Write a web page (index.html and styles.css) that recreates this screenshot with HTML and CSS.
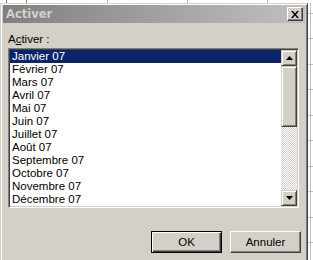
FILE: index.html
```html
<!DOCTYPE html>
<html>
<head>
<meta charset="utf-8">
<link rel="stylesheet" href="styles.css">
</head>
<body>
<div class="top">
  <div class="c c1"></div><div class="c c2"></div><div class="c c3"></div><div class="c c4"></div><div class="c c5"></div><div class="c c6"></div>
</div>
<div class="main">
  <div class="dialog">
    <div class="titlebar">
      <span class="title">Activer</span>
      <span class="close"><svg width="8" height="7" viewBox="0 0 8 7"><path d="M0 0h2l2 2.5L6 0h2L5 3.5 8 7H6L4 4.5 2 7H0l3-3.5z" fill="#000"/></svg></span>
    </div>
    <div class="body">
      <div class="label">A<u>c</u>tiver :</div>
      <div class="listbox">
        <div class="items">
          <div class="item sel">Janvier 07</div>
          <div class="item">Février 07</div>
          <div class="item">Mars 07</div>
          <div class="item">Avril 07</div>
          <div class="item">Mai 07</div>
          <div class="item">Juin 07</div>
          <div class="item">Juillet 07</div>
          <div class="item">Août 07</div>
          <div class="item">Septembre 07</div>
          <div class="item">Octobre 07</div>
          <div class="item">Novembre 07</div>
          <div class="item">Décembre 07</div>
        </div>
        <div class="scroll">
          <div class="sbtn"><svg width="7" height="4" viewBox="0 0 7 4"><path d="M3.5 0L7 4H0z" fill="#000"/></svg></div>
          <div class="thumb"></div>
          <div class="track"></div>
          <div class="sbtn"><svg width="7" height="4" viewBox="0 0 7 4"><path d="M0 0h7L3.5 4z" fill="#000"/></svg></div>
        </div>
      </div>
      <div class="buttons">
        <div class="btn default"><span>OK</span></div>
        <div class="btn"><span>Annuler</span></div>
      </div>
    </div>
  </div>
  <div class="sheet"></div>
</div>
</body>
</html>
```

FILE: styles.css
```css
html, body {
  margin: 0;
  padding: 0;
  width: 313px;
  height: 260px;
  overflow: hidden;
  background: #fff;
  font-family: "Liberation Sans", Arial, sans-serif;
  font-size: 11px;
}
.top {
  height: 3px;
  display: flex;
  overflow: hidden;
  background: #fff;
}
.c { height: 3px; border-right: 1px solid #c0c0c0; box-sizing: border-box; }
.c1 { width: 7px; border-right: 1px solid #808080; }
.c2 { width: 20px; border-right: 1px solid #808080; }
.c3 { width: 81px; }
.c4 { width: 80px; }
.c5 { width: 80px; }
.c6 { width: 45px; border-right: none; }
.main {
  display: flex;
  height: 257px;
}
.dialog {
  width: 308px;
  height: 257px;
  box-sizing: border-box;
  background: #d4d0c8;
  border-top: 1px solid #d4d0c8;
  border-left: 1px solid #d4d0c8;
  border-right: 1px solid #404040;
  box-shadow: inset 1px 1px 0 #fff, inset -1px 0 0 #808080;
  padding: 1px 2px 0 2px;
  display: flex;
  flex-direction: column;
}
.titlebar {
  height: 18px;
  background: linear-gradient(to right, #808080, #c0c0c0);
  display: flex;
  align-items: center;
  justify-content: space-between;
  padding: 0 2px 0 3px;
}
.title {
  color: #d4d0c8;
  font-family: "DejaVu Sans", sans-serif;
  font-weight: bold;
  font-size: 11.5px;
}
.close {
  width: 16px;
  height: 14px;
  box-sizing: border-box;
  background: #d4d0c8;
  border-top: 1px solid #fff;
  border-left: 1px solid #fff;
  border-right: 1px solid #404040;
  border-bottom: 1px solid #404040;
  box-shadow: inset -1px -1px 0 #808080;
  display: flex;
  align-items: center;
  justify-content: center;
  padding-right: 1px;
}
.body {
  flex: 1;
  padding: 9px 6px 0 5px;
  display: flex;
  flex-direction: column;
}
.label {
  height: 13px;
  line-height: 13px;
  color: #000;
  font-size: 11.5px;
  margin-top: 1px;
  margin-bottom: 2px;
}
.label u { text-decoration-thickness: 1px; text-underline-offset: 1px; }
.listbox {
  height: 160px;
  box-sizing: border-box;
  border-top: 1px solid #808080;
  border-left: 1px solid #808080;
  border-right: 1px solid #fff;
  border-bottom: 1px solid #fff;
  box-shadow: inset 1px 1px 0 #404040, inset -1px -1px 0 #d4d0c8;
  padding: 1px;
  display: flex;
  background: #fff;
}
.items {
  flex: 1;
  background: #fff;
}
.item {
  height: 13px;
  line-height: 13px;
  padding-left: 2px;
  color: #000;
  font-size: 11.5px;
  white-space: nowrap;
}
.item.sel {
  background: #0a246a;
  color: #fff;
}
.scroll {
  width: 16px;
  display: flex;
  flex-direction: column;
}
.sbtn, .thumb {
  box-sizing: border-box;
  background: #d4d0c8;
  border-top: 1px solid #d4d0c8;
  border-left: 1px solid #d4d0c8;
  border-right: 1px solid #404040;
  border-bottom: 1px solid #404040;
  box-shadow: inset 1px 1px 0 #fff, inset -1px -1px 0 #808080;
}
.sbtn {
  height: 16px;
  display: flex;
  align-items: center;
  justify-content: center;
}
.thumb { height: 61px; }
.track {
  flex: 1;
  background-color: #fff;
  background-image: repeating-conic-gradient(#d4d0c8 0 25%, #fff 0 50%);
  background-size: 2px 2px;
}
.buttons {
  margin-top: 23px;
  margin-right: -2px;
  display: flex;
  justify-content: flex-end;
  gap: 8px;
}
.btn {
  width: 71px;
  height: 22px;
  box-sizing: border-box;
  background: #d4d0c8;
  border-top: 1px solid #fff;
  border-left: 1px solid #fff;
  border-right: 1px solid #404040;
  border-bottom: 1px solid #404040;
  box-shadow: inset -1px -1px 0 #808080;
  display: flex;
  align-items: center;
  justify-content: center;
  font-size: 11.5px;
  color: #000;
}
.btn.default {
  border: 1px solid #000;
  box-shadow: inset 1px 1px 0 #fff, inset -1px -1px 0 #404040, inset -2px -2px 0 #808080;
}
.sheet {
  flex: 1;
  background-color: #fff;
  background-image:
    linear-gradient(to right, transparent 2px, #c0c0c0 2px, #c0c0c0 3px, transparent 3px),
    repeating-linear-gradient(to bottom, transparent 0, transparent 10px, #c0c0c0 10px, #c0c0c0 11px, transparent 11px, transparent 25.5px);
}
```
